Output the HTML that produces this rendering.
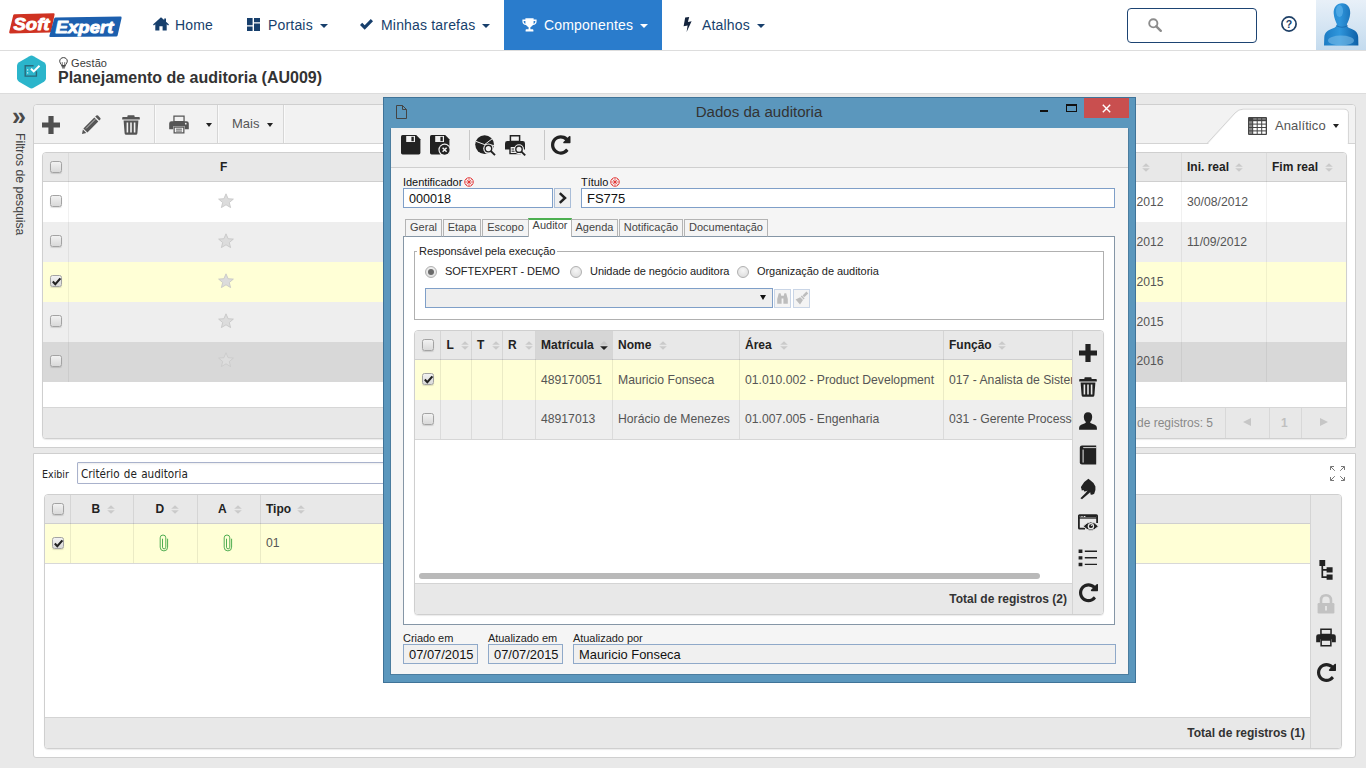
<!DOCTYPE html>
<html lang="pt-BR">
<head>
<meta charset="utf-8">
<title>Planejamento de auditoria (AU009)</title>
<style>
*{box-sizing:border-box;margin:0;padding:0}
html,body{width:1366px;height:768px;overflow:hidden;background:#e9e9e9;font-family:"Liberation Sans",Arial,sans-serif;color:#333}
.a{position:absolute}
svg{display:block;overflow:visible}
#hdr{left:0;top:0;width:1366px;height:51px;background:#fff;border-bottom:1px solid #ddd}
.nav{top:0;height:50px;line-height:50px;font-size:14px;color:#173f6c;white-space:nowrap;letter-spacing:0.18px}
.nav.act{background:#2a7ccc;color:#fff}
.caret{display:inline-block;width:0;height:0;border-left:4px solid transparent;border-right:4px solid transparent;border-top:4px solid currentColor;vertical-align:middle;margin-left:3px}
#sub{left:0;top:51px;width:1366px;height:43px;background:#fff;border-bottom:1px solid #dcdcdc}
.panel{background:#fff;border:1px solid #d0d0d0;border-radius:3px}
.gh{font-weight:bold;font-size:12px;color:#222}
.gt{font-size:12.2px;color:#555;white-space:nowrap}
.cb{width:12px;height:12px;border:1px solid #a3a3a3;border-radius:2.5px;background:linear-gradient(#f2f2f2,#d9d9d9);box-shadow:0 1px 1px rgba(0,0,0,0.13)}
.sort{width:7px;height:9px}
</style>
</head>
<body>
<!-- ============ HEADER ============ -->
<div class="a" id="hdr">
<!-- logo -->
<svg class="a" style="left:8px;top:12px" width="116" height="28" viewBox="0 0 116 28">
<path d="M6.5,2.2 L45.5,1.2 Q46.8,1.2 46.6,2.5 L43.2,19.6 Q43,20.6 41.8,20.6 L2.2,21.4 Q0.9,21.4 1.2,20.1 L5.2,3.3 Q5.5,2.2 6.5,2.2Z" fill="#cf3222"/>
<path d="M47.5,5.4 L112.5,4.6 Q113.8,4.6 113.6,5.9 L109.6,23.4 Q109.3,24.4 108.2,24.4 L42.4,25 Q41,25 41.4,23.7 L46.2,6.4 Q46.5,5.4 47.5,5.4Z" fill="#1c5fae"/>
<text x="5.5" y="17.6" font-family="Liberation Sans,sans-serif" font-weight="bold" font-style="italic" font-size="17" fill="#fff" stroke="#fff" stroke-width="0.9" stroke-linejoin="round" textLength="36" lengthAdjust="spacingAndGlyphs">Soft</text>
<text x="47.5" y="20.8" font-family="Liberation Sans,sans-serif" font-weight="bold" font-style="italic" font-size="17" fill="#fff" stroke="#fff" stroke-width="0.9" stroke-linejoin="round" textLength="58" lengthAdjust="spacingAndGlyphs">Expert</text>
</svg>
<!-- Home -->
<svg class="a" style="left:153px;top:17px" width="16" height="14" viewBox="0 0 16 14"><path d="M8,0.3 L0,7.4 L0.9,8.4 L2.3,7.2 V13.6 H6.4 V9.2 H9.6 V13.6 H13.7 V7.2 L15.1,8.4 L16,7.4 L13,4.7 V1.4 H11.2 V3.1Z" fill="#173f6c"/></svg>
<div class="a nav" style="left:175px">Home</div>
<!-- Portais -->
<svg class="a" style="left:247px;top:18px" width="13" height="13" viewBox="0 0 13 13"><path d="M0,0H5.6V7.2H0Z M7,0H13V4.2H7Z M0,8.6H5.6V13H0Z M7,5.6H13V13H7Z" fill="#173f6c"/></svg>
<div class="a nav" style="left:268px">Portais<span class="caret" style="margin-left:7px"></span></div>
<!-- Minhas tarefas -->
<svg class="a" style="left:360px;top:19px" width="13" height="11" viewBox="0 0 13 11"><path d="M0,5.9 L2.2,3.7 L4.7,6.2 L10.8,0.1 L13,2.3 L4.7,10.7Z" fill="#173f6c"/></svg>
<div class="a nav" style="left:381px">Minhas tarefas<span class="caret" style="margin-left:7px"></span></div>
<!-- Componentes -->
<div class="a nav act" style="left:504px;width:158px"></div>
<svg class="a" style="left:522px;top:18px" width="15" height="14" viewBox="0 0 15 14"><path d="M3.4,0.3H11.6V1.6H14.6V3.4C14.6,5.5 13,6.9 11,7.1C10.3,8.2 9.4,8.9 8.4,9.2V11.2H10.4C11,11.2 11.4,11.6 11.4,12.2V13.4H3.6V12.2C3.6,11.6 4,11.2 4.6,11.2H6.6V9.2C5.6,8.9 4.7,8.2 4,7.1C2,6.9 0.4,5.5 0.4,3.4V1.6H3.4Z M1.7,2.9V3.4C1.7,4.5 2.4,5.3 3.5,5.7C3.4,5 3.4,3.8 3.4,2.9Z M13.3,2.9H11.6C11.6,3.8 11.6,5 11.5,5.7C12.6,5.3 13.3,4.5 13.3,3.4Z" fill="#fff" fill-rule="evenodd"/></svg>
<div class="a nav" style="left:544px;color:#fff">Componentes<span class="caret" style="margin-left:7px"></span></div>
<!-- Atalhos -->
<svg class="a" style="left:683px;top:17px" width="9" height="15" viewBox="0 0 9 15"><path d="M2.2,0.5 L6.2,0 L4.9,5 L8.6,4.3 L3.6,15 L4.6,8.4 L0.6,9.2Z" fill="#14233c"/></svg>
<div class="a nav" style="left:702px">Atalhos<span class="caret" style="margin-left:7px"></span></div>
<!-- search -->
<div class="a" style="left:1127px;top:8px;width:130px;height:35px;border:1px solid #1d4473;border-radius:4px;background:#fff"></div>
<svg class="a" style="left:1148px;top:18px" width="14" height="14" viewBox="0 0 14 14"><circle cx="5.3" cy="5.3" r="4.1" fill="none" stroke="#8c8c8c" stroke-width="1.9"/><path d="M8.3,8.3 L12.8,12.8" stroke="#8c8c8c" stroke-width="2.4" stroke-linecap="round"/></svg>
<!-- help -->
<svg class="a" style="left:1280px;top:15px" width="18" height="18" viewBox="0 0 18 18"><circle cx="9" cy="9" r="7.1" fill="#fff" stroke="#1d3f66" stroke-width="1.7"/><text x="9" y="12.9" text-anchor="middle" font-family="Liberation Sans,sans-serif" font-weight="bold" font-size="10.5" fill="#173f6c">?</text></svg>
<!-- avatar -->
<svg class="a" style="left:1316px;top:0" width="50" height="50" viewBox="0 0 50 50">
<defs><linearGradient id="avb" x1="0" y1="0" x2="0" y2="1"><stop offset="0" stop-color="#e8f0f8"/><stop offset="1" stop-color="#c4dbee"/></linearGradient>
<linearGradient id="avf" x1="0" y1="0" x2="1" y2="0"><stop offset="0" stop-color="#1c7cc4"/><stop offset="0.45" stop-color="#2f96dc"/><stop offset="1" stop-color="#0d5fa6"/></linearGradient></defs>
<rect width="50" height="50" fill="url(#avb)"/>
<path d="M26,3.2 C31.5,3.2 34.6,7.5 34.2,13.5 C33.9,18 32.2,21.5 31,24 C30.4,26 31.5,27.4 34.5,28.6 C39.5,30.4 41.8,32.6 42.2,37 L42.4,45.5 L8,45.5 L8.3,37 C8.8,32.6 11.5,30.4 16.5,28.6 C19.5,27.4 21.2,26 20.8,24 C19.8,21.5 18,18 17.7,13.5 C17.3,7.5 20.5,3.2 26,3.2Z" fill="url(#avf)"/>
<ellipse cx="25" cy="40.5" rx="13" ry="5" fill="#7fc0ea" opacity="0.55"/>
<ellipse cx="23.5" cy="11" rx="3.6" ry="6" fill="#6cbcf0" opacity="0.5"/><path d="M20,25.5 Q26,29 32,25.5" fill="none" stroke="#0b4f8e" stroke-width="0.9" opacity="0.55"/>
</svg>
</div>
<!-- ============ SUBHEADER ============ -->
<div class="a" id="sub">
<svg class="a" style="left:16px;top:4px" width="31" height="35" viewBox="0 0 31 35">
<path d="M13.4,1.2 Q15.5,0 17.6,1.2 L28,7.2 Q30,8.4 30,10.8 V23.2 Q30,25.6 28,26.8 L17.6,32.8 Q15.5,34 13.4,32.8 L3,26.8 Q1,25.6 1,23.2 V10.8 Q1,8.4 3,7.2Z" fill="#2bb5cb"/>
<path d="M17.6,10.8H9.2V21.1H20.4V16.2" fill="none" stroke="#2a6a7c" stroke-width="1.4"/>
<path d="M15,13.7 L17.7,16.4 L23.5,10.8" fill="none" stroke="#fff" stroke-width="2"/>
<path d="M11.6,14.2v1.4 M11.6,17.2v1.4" stroke="#d8f2f6" stroke-width="1.3"/>
</svg>
<svg class="a" style="left:59px;top:6px" width="9" height="12" viewBox="0 0 9 12"><path d="M4.5,0.6 C6.7,0.6 8.3,2.2 8.3,4.2 C8.3,5.6 7.4,6.4 6.9,7.2 C6.6,7.7 6.5,8.2 6.5,8.6 H2.5 C2.5,8.2 2.4,7.7 2.1,7.2 C1.6,6.4 0.7,5.6 0.7,4.2 C0.7,2.2 2.3,0.6 4.5,0.6Z" fill="none" stroke="#333" stroke-width="0.95"/><path d="M2.7,9.7H6.3 M3.1,10.9H5.9" stroke="#333" stroke-width="0.95"/><path d="M3.6,8.4 L3.2,5 M5.4,8.4 L5.8,5" stroke="#333" stroke-width="0.6"/></svg>
<div class="a" style="left:71px;top:6px;font-size:11px;line-height:12px;color:#3a3a3a;letter-spacing:0.1px">Gestão</div>
<div class="a" style="left:58px;top:17px;font-size:16px;line-height:19px;font-weight:bold;color:#333;white-space:nowrap">Planejamento de auditoria (AU009)</div>
</div>
<!-- ============ SIDEBAR ============ -->
<div class="a" style="left:12px;top:104px;font-size:25px;line-height:24px;color:#4a4a4a;font-weight:bold;letter-spacing:-2px">»</div>
<div class="a" style="left:12.5px;top:133px;width:14px;height:110px"><div style="transform:rotate(90deg);transform-origin:0 0;position:absolute;left:14px;top:0;white-space:nowrap;font-size:12.2px;line-height:14px;color:#444">Filtros de pesquisa</div></div>
<!-- ============ PANEL 1 ============ -->
<div id="p1">
<div class="a" style="left:33px;top:104px;width:1323px;height:344px;background:#fff;border:1px solid #cfcfcf;border-radius:4px 4px 0 0"></div>
<div class="a" style="left:34px;top:105px;width:1321px;height:39px;background:#f2f2f2;border-bottom:1px solid #d4d4d4;border-radius:3px 3px 0 0"></div>
<div class="a" style="left:154px;top:105px;width:2px;height:38px;border-left:1px solid #d6d6d6;background:#fafafa"></div>
<div class="a" style="left:217px;top:105px;width:2px;height:38px;border-left:1px solid #d6d6d6;background:#fafafa"></div>
<div class="a" style="left:283px;top:105px;width:2px;height:38px;border-left:1px solid #d6d6d6;background:#fafafa"></div>
<svg class="a" style="left:42px;top:116px" width="18" height="18" viewBox="0 0 18 18"><path d="M6.4,0H11.6V6.4H18V11.6H11.6V18H6.4V11.6H0V6.4H6.4Z" fill="#505050"/></svg>
<svg class="a" style="left:82px;top:115px" width="19" height="19" viewBox="0 0 19 19"><path d="M13.2,1.6 L14.4,0.5 Q15.2,-0.1 16,0.6 L18.3,2.9 Q19,3.7 18.3,4.5 L17.2,5.6Z M12.3,2.6 L16.3,6.6 L5.4,17.4 L1.4,13.5Z M0.9,14.6 L4.3,18 L0,18.9Z" fill="#555"/><path d="M13.3,4.2 L4,13.5" stroke="#f2f2f2" stroke-width="0.7"/></svg>
<svg class="a" style="left:122px;top:115px" width="18" height="20" viewBox="0 0 18 20"><path d="M6.2,0.3H11.8Q12.6,0.3 12.6,1.1V2H17Q17.8,2 17.8,2.8V4.4H0.2V2.8Q0.2,2 1,2H5.4V1.1Q5.4,0.3 6.2,0.3Z" fill="#555"/><path d="M1.6,5.6H16.4L15.4,18.2Q15.3,19.7 13.8,19.7H4.2Q2.7,19.7 2.6,18.2Z M4.6,7.6V17.4H6.2V7.6Z M8.2,7.6V17.4H9.8V7.6Z M11.8,7.6V17.4H13.4V7.6Z" fill="#555" fill-rule="evenodd"/></svg>
<svg class="a" style="left:169px;top:115px" width="20" height="19" viewBox="0 0 21 19"><path d="M5.2,0.6H15.8V6.4H5.2Z" fill="none" stroke="#555" stroke-width="1.3"/><path d="M2.6,6H18.4Q20.8,6 20.8,8.4V14.4H16.6V11.4H4.4V14.4H0.2V8.4Q0.2,6 2.6,6Z" fill="#555"/><circle cx="17.6" cy="8.6" r="0.9" fill="#f2f2f2"/><path d="M5.4,12.2H15.6V18.4H5.4Z" fill="none" stroke="#555" stroke-width="1.3"/><path d="M7.4,14.4H13.6 M7.4,16.4H13.6" stroke="#555" stroke-width="1"/></svg>
<div class="a" style="left:206px;top:123px;border-left:3.5px solid transparent;border-right:3.5px solid transparent;border-top:4px solid #222"></div>
<div class="a" style="left:232px;top:116px;font-size:13px;line-height:16px;color:#555">Mais</div>
<div class="a" style="left:267px;top:123px;border-left:3.5px solid transparent;border-right:3.5px solid transparent;border-top:4px solid #222"></div>
<svg class="a" style="left:1200px;top:105px" width="156" height="40" viewBox="0 0 156 40"><path d="M0,38.5 H7 L35,8 Q38.5,4.2 43,4.2 H144 Q148.4,4.2 148.4,8.6 V38.5 H155" fill="none" stroke="#d4d4d4" stroke-width="1"/><path d="M7.6,39.6 L35.6,8.6 Q39,5 43,4.8 H144 Q147.8,4.8 147.8,8.6 V39.6Z" fill="#fff"/></svg>
<svg class="a" style="left:1248px;top:117px" width="19" height="18" viewBox="0 0 19 18"><rect x="0" y="0" width="19" height="18" rx="1" fill="#444"/><rect x="5.2" y="4.2" width="3.5" height="2.4" fill="#fff"/><rect x="9.7" y="4.2" width="3.5" height="2.4" fill="#fff"/><rect x="14.2" y="4.2" width="3.5" height="2.4" fill="#fff"/><rect x="5.2" y="7.6" width="3.5" height="2.4" fill="#fff"/><rect x="9.7" y="7.6" width="3.5" height="2.4" fill="#fff"/><rect x="14.2" y="7.6" width="3.5" height="2.4" fill="#fff"/><rect x="5.2" y="11.0" width="3.5" height="2.4" fill="#fff"/><rect x="9.7" y="11.0" width="3.5" height="2.4" fill="#fff"/><rect x="14.2" y="11.0" width="3.5" height="2.4" fill="#fff"/><rect x="5.2" y="14.399999999999999" width="3.5" height="2.4" fill="#fff"/><rect x="9.7" y="14.399999999999999" width="3.5" height="2.4" fill="#fff"/><rect x="14.2" y="14.399999999999999" width="3.5" height="2.4" fill="#fff"/><rect x="1" y="4.2" width="3.2" height="2.4" fill="#888"/><rect x="1" y="7.6" width="3.2" height="2.4" fill="#888"/><rect x="1" y="11.0" width="3.2" height="2.4" fill="#888"/><rect x="1" y="14.399999999999999" width="3.2" height="2.4" fill="#888"/><rect x="5.2" y="1" width="3.5" height="2" fill="#777"/><rect x="9.7" y="1" width="3.5" height="2" fill="#777"/><rect x="14.2" y="1" width="3.5" height="2" fill="#777"/></svg>
<div class="a" style="left:1275px;top:118px;font-size:13px;line-height:16px;color:#555;letter-spacing:0.1px">Analítico</div>
<div class="a" style="left:1333px;top:124px;border-left:3.5px solid transparent;border-right:3.5px solid transparent;border-top:4px solid #222"></div>
<div class="a" style="left:42px;top:152px;width:1305px;height:287px;border:1px solid #cfcfcf;border-radius:4px;background:#fff;box-shadow:0 1px 1px rgba(0,0,0,0.08)"></div>
<div class="a" style="left:43px;top:153px;width:1303px;height:29px;background:#e8e8e8;border-bottom:1px solid #cfcfcf;border-radius:3px 3px 0 0"></div>
<div class="a" style="left:43px;top:182px;width:1303px;height:40px;background:#fff"></div>
<div class="a" style="left:43px;top:222px;width:1303px;height:40px;background:#eee"></div>
<div class="a" style="left:43px;top:262px;width:1303px;height:40px;background:#ffffd6"></div>
<div class="a" style="left:43px;top:302px;width:1303px;height:40px;background:#eee"></div>
<div class="a" style="left:43px;top:342px;width:1303px;height:40px;background:#d8d8d8"></div>
<div class="a" style="left:43px;top:407px;width:1303px;height:31px;background:#e8e8e8;border-top:1px solid #d6d6d6;border-radius:0 0 3px 3px"></div>
<div class="a" style="left:68px;top:153px;width:1px;height:229px;background:rgba(0,0,0,0.055)"></div>
<div class="a" style="left:1181px;top:153px;width:1px;height:229px;background:rgba(0,0,0,0.055)"></div>
<div class="a" style="left:1266px;top:153px;width:1px;height:229px;background:rgba(0,0,0,0.055)"></div>
<div class="a cb" style="left:50px;top:161px"></div>
<div class="a gh" style="left:220px;top:160px;line-height:14px">F</div>
<svg class="a" style="left:1142px;top:163px" width="8" height="9" viewBox="0 0 8 9"><path d="M4,0.2 L7.8,3.7 H0.2Z M4,8.8 L0.2,5.3 H7.8Z" fill="#cacaca"/></svg>
<div class="a gh" style="left:1187px;top:160px;line-height:14px">Ini. real</div><svg class="a" style="left:1235px;top:163px" width="8" height="9" viewBox="0 0 8 9"><path d="M4,0.2 L7.8,3.7 H0.2Z M4,8.8 L0.2,5.3 H7.8Z" fill="#cacaca"/></svg>
<div class="a gh" style="left:1272px;top:160px;line-height:14px">Fim real</div><svg class="a" style="left:1325px;top:163px" width="8" height="9" viewBox="0 0 8 9"><path d="M4,0.2 L7.8,3.7 H0.2Z M4,8.8 L0.2,5.3 H7.8Z" fill="#cacaca"/></svg>
<div class="a cb" style="left:50px;top:195px"></div>
<svg class="a" style="left:218px;top:193px" width="16" height="15" viewBox="0 0 16 15"><path d="M8,0.8 L10.1,5.7 L15.4,6.1 L11.3,9.5 L12.6,14.6 L8,11.8 L3.4,14.6 L4.7,9.5 L0.6,6.1 L5.9,5.7Z" fill="#dcdcdc" stroke="#c4c4c4" stroke-width="0.8"/></svg>
<div class="a gt" style="left:1108px;top:194px;width:55.5px;text-align:right;line-height:16px">2012</div>
<div class="a gt" style="left:1187px;top:194px;line-height:16px">30/08/2012</div>
<div class="a cb" style="left:50px;top:235px"></div>
<svg class="a" style="left:218px;top:233px" width="16" height="15" viewBox="0 0 16 15"><path d="M8,0.8 L10.1,5.7 L15.4,6.1 L11.3,9.5 L12.6,14.6 L8,11.8 L3.4,14.6 L4.7,9.5 L0.6,6.1 L5.9,5.7Z" fill="#dcdcdc" stroke="#c4c4c4" stroke-width="0.8"/></svg>
<div class="a gt" style="left:1108px;top:234px;width:55.5px;text-align:right;line-height:16px">2012</div>
<div class="a gt" style="left:1187px;top:234px;line-height:16px">11/09/2012</div>
<div class="a cb" style="left:50px;top:275px"><svg width="11" height="11" viewBox="0 0 11 11" style="position:absolute;left:0;top:0"><path d="M1.8,5.6 L4.3,8.2 L9.4,2.4" fill="none" stroke="#222" stroke-width="2.1"/></svg></div>
<svg class="a" style="left:218px;top:273px" width="16" height="15" viewBox="0 0 16 15"><path d="M8,0.8 L10.1,5.7 L15.4,6.1 L11.3,9.5 L12.6,14.6 L8,11.8 L3.4,14.6 L4.7,9.5 L0.6,6.1 L5.9,5.7Z" fill="#dcdcdc" stroke="#c4c4c4" stroke-width="0.8"/></svg>
<div class="a gt" style="left:1108px;top:274px;width:55.5px;text-align:right;line-height:16px">2015</div>
<div class="a cb" style="left:50px;top:315px"></div>
<svg class="a" style="left:218px;top:313px" width="16" height="15" viewBox="0 0 16 15"><path d="M8,0.8 L10.1,5.7 L15.4,6.1 L11.3,9.5 L12.6,14.6 L8,11.8 L3.4,14.6 L4.7,9.5 L0.6,6.1 L5.9,5.7Z" fill="#dcdcdc" stroke="#c4c4c4" stroke-width="0.8"/></svg>
<div class="a gt" style="left:1108px;top:314px;width:55.5px;text-align:right;line-height:16px">2015</div>
<div class="a cb" style="left:50px;top:355px"></div>
<svg class="a" style="left:218px;top:352px" width="16" height="15" viewBox="0 0 16 15"><path d="M8,0.8 L10.1,5.7 L15.4,6.1 L11.3,9.5 L12.6,14.6 L8,11.8 L3.4,14.6 L4.7,9.5 L0.6,6.1 L5.9,5.7Z" fill="#dddddd" stroke="#c9c9c9" stroke-width="0.8"/></svg>
<div class="a gt" style="left:1108px;top:353px;width:55.5px;text-align:right;line-height:16px">2016</div>
<div class="a" style="left:1000px;top:415px;width:213px;text-align:right;font-size:12px;line-height:16px;color:#888;white-space:nowrap">Total de registros: 5</div>
<div class="a" style="left:1225px;top:408px;width:1px;height:30px;background:#d8d8d8"></div>
<div class="a" style="left:1269px;top:408px;width:1px;height:30px;background:#d8d8d8"></div>
<div class="a" style="left:1301px;top:408px;width:1px;height:30px;background:#d8d8d8"></div>
<div class="a" style="left:1243px;top:418px;border-top:4.5px solid transparent;border-bottom:4.5px solid transparent;border-right:8px solid #c6c6c6"></div>
<div class="a" style="left:1281px;top:415px;font-size:12px;line-height:16px;color:#c0c0c0;font-weight:bold">1</div>
<div class="a" style="left:1320px;top:418px;border-top:4.5px solid transparent;border-bottom:4.5px solid transparent;border-left:8px solid #c6c6c6"></div>
</div>
<!-- ============ PANEL 2 ============ -->
<div id="p2">
<div class="a" style="left:33px;top:453px;width:1323px;height:305px;background:#fff;border:1px solid #cfcfcf;border-radius:0 0 3px 3px"></div>
<div class="a" style="left:42px;top:466.5px;font-family:'DejaVu Sans Condensed','DejaVu Sans',sans-serif;font-size:10.6px;line-height:14px;color:#222">Exibir</div>
<div class="a" style="left:77px;top:462px;width:340px;height:22px;border:1px solid #a9b2cc;background:#fff;border-radius:1px;box-shadow:inset 0 1px 2px rgba(0,0,0,0.08)"></div>
<div class="a" style="left:81px;top:466.5px;font-family:'DejaVu Sans Condensed','DejaVu Sans',sans-serif;font-size:11.6px;line-height:14px;color:#222;word-spacing:1px;white-space:nowrap">Critério de auditoria</div>
<svg class="a" style="left:1330px;top:466px" width="15" height="15" viewBox="0 0 15 15"><g fill="none" stroke="#777" stroke-width="1"><path d="M0.5,4V0.5H4M0.7,0.7L4.8,4.8"/><path d="M11,0.5H14.5V4M14.3,0.7L10.2,4.8"/><path d="M0.5,11V14.5H4M0.7,14.3L4.8,10.2"/><path d="M11,14.5H14.5V11M14.3,14.3L10.2,10.2"/></g></svg>
<div class="a" style="left:44px;top:494px;width:1298px;height:255px;border:1px solid #cfcfcf;border-radius:4px;background:#fff;box-shadow:0 1px 1px rgba(0,0,0,0.08)"></div>
<div class="a" style="left:45px;top:495px;width:1296px;height:29px;background:#e8e8e8;border-bottom:1px solid #cfcfcf;border-radius:3px 3px 0 0"></div>
<div class="a" style="left:45px;top:524px;width:1265px;height:40px;background:#ffffd6;border-bottom:1px solid #d8d8d8"></div>
<div class="a" style="left:1310px;top:495px;width:31px;height:253px;background:#e8e8e8;border-left:1px solid #d4d4d4;border-radius:0 3px 3px 0"></div>
<div class="a" style="left:45px;top:717px;width:1265px;height:31px;background:#e8e8e8;border-top:1px solid #d4d4d4;border-radius:0 0 0 3px"></div>
<div class="a" style="left:70px;top:495px;width:1px;height:68px;background:rgba(0,0,0,0.08)"></div>
<div class="a" style="left:133px;top:495px;width:1px;height:68px;background:rgba(0,0,0,0.08)"></div>
<div class="a" style="left:197px;top:495px;width:1px;height:68px;background:rgba(0,0,0,0.08)"></div>
<div class="a" style="left:260px;top:495px;width:1px;height:68px;background:rgba(0,0,0,0.08)"></div>
<div class="a cb" style="left:52px;top:503px"></div>
<div class="a cb" style="left:52px;top:537px"><svg width="11" height="11" viewBox="0 0 11 11" style="position:absolute;left:0;top:0"><path d="M1.8,5.6 L4.3,8.2 L9.4,2.4" fill="none" stroke="#222" stroke-width="2.1"/></svg></div>
<div class="a gh" style="left:91.5px;top:502px;line-height:14px">B</div><svg class="a" style="left:107px;top:505px" width="8" height="9" viewBox="0 0 8 9"><path d="M4,0.2 L7.8,3.7 H0.2Z M4,8.8 L0.2,5.3 H7.8Z" fill="#cacaca"/></svg>
<div class="a gh" style="left:155.5px;top:502px;line-height:14px">D</div><svg class="a" style="left:171px;top:505px" width="8" height="9" viewBox="0 0 8 9"><path d="M4,0.2 L7.8,3.7 H0.2Z M4,8.8 L0.2,5.3 H7.8Z" fill="#cacaca"/></svg>
<div class="a gh" style="left:218px;top:502px;line-height:14px">A</div><svg class="a" style="left:234px;top:505px" width="8" height="9" viewBox="0 0 8 9"><path d="M4,0.2 L7.8,3.7 H0.2Z M4,8.8 L0.2,5.3 H7.8Z" fill="#cacaca"/></svg>
<div class="a gh" style="left:266px;top:502px;line-height:14px">Tipo</div><svg class="a" style="left:297px;top:505px" width="8" height="9" viewBox="0 0 8 9"><path d="M4,0.2 L7.8,3.7 H0.2Z M4,8.8 L0.2,5.3 H7.8Z" fill="#cacaca"/></svg>
<svg class="a" style="left:158px;top:533px" width="12" height="20" viewBox="0 0 12 20"><path d="M9.6,6.1 V14.2 A3.7,3.7 0 0 1 2.2,14.2 V4.8 A2.8,2.8 0 0 1 7.8,4.8 V14.2 A1.65,1.65 0 0 1 4.5,14.2 V6.1" fill="none" stroke="#47a94b" stroke-width="0.95" stroke-linecap="round"/></svg>
<svg class="a" style="left:221.7px;top:533px" width="12" height="20" viewBox="0 0 12 20"><path d="M9.6,6.1 V14.2 A3.7,3.7 0 0 1 2.2,14.2 V4.8 A2.8,2.8 0 0 1 7.8,4.8 V14.2 A1.65,1.65 0 0 1 4.5,14.2 V6.1" fill="none" stroke="#47a94b" stroke-width="0.95" stroke-linecap="round"/></svg>
<div class="a gt" style="left:266px;top:535px;line-height:16px">01</div>
<div class="a gh" style="left:1100px;top:726px;width:1205px;line-height:14px"></div>
<div class="a" style="left:1105px;top:726px;width:200px;text-align:right;font-size:12px;font-weight:bold;line-height:14px;color:#333;white-space:nowrap">Total de registros (1)</div>
<svg class="a" style="left:1319px;top:560px" width="14" height="20" viewBox="0 0 14 20"><path d="M0.4,0H6.2V6H0.4Z M7.6,7.2H13.6V12.4H7.6Z M7.6,14.4H13.6V19.8H7.6Z" fill="#222"/><path d="M3.3,6V17.1H8 M3.3,9.8H8" fill="none" stroke="#222" stroke-width="1.7"/></svg>
<svg class="a" style="left:1317px;top:594px" width="18" height="20" viewBox="0 0 18 20"><path d="M4,9V6.4Q4,1.2 9,1.2Q14,1.2 14,6.4V9" fill="none" stroke="#c2c2c2" stroke-width="2.6"/><rect x="0.6" y="9" width="16.8" height="10.4" rx="1.2" fill="#c2c2c2"/><path d="M9,12V16.4" stroke="#e8e8e8" stroke-width="1.8"/></svg>
<svg class="a" style="left:1316px;top:628px" width="20" height="19" viewBox="0 0 21 19"><path d="M5.2,0.8H15.8V6.4H5.2Z" fill="#e8e8e8" stroke="#222" stroke-width="1.6"/><path d="M2.6,6H18.4Q20.8,6 20.8,8.4V14.4H16.6V11.4H4.4V14.4H0.2V8.4Q0.2,6 2.6,6Z" fill="#222"/><path d="M5.4,12H15.6V18.2H5.4Z" fill="#e8e8e8" stroke="#222" stroke-width="1.6"/></svg>
<svg class="a" style="left:1317px;top:662.6px" width="19" height="19" viewBox="128 128 1536 1536"><path d="M1664 256v448q0 26-19 45t-45 19h-448q-42 0-59-40-17-39 14-69l138-138q-148-137-349-137-104 0-198.500 40.500t-163.500 109.500-109.500 163.500-40.500 198.500 40.500 198.500 109.500 163.500 163.500 109.500 198.500 40.500q119 0 225-52t179-147q7-10 23-12 15 0 25 9l137 138q9 8 9.500 20.500t-7.500 22.500q-109 132-264 204.500t-327 72.500q-156 0-298-61t-245-164-164-245-61-298 61-298 164-245 245-164 298-61q147 0 284.500 55.500t244.500 156.500l130-129q29-31 70-14 39 17 39 59z" fill="#222"/></svg>
</div>
<!-- ============ DIALOG ============ -->
<div id="dlg">
<div class="a" style="left:383px;top:97px;width:753px;height:586px;background:#5b97bd;border:1px solid #3f7398"></div>
<div class="a" style="left:390px;top:128px;width:739px;height:547px;background:#f5f5f5;border:1px solid #4b7d9f;border-top-color:#5b97bd"></div>
<svg class="a" style="left:396px;top:105px" width="11" height="14" viewBox="0 0 11 14"><path d="M0.5,0.5H6.5L10.5,4.5V13.5H0.5Z M6.5,0.5V4.5H10.5" fill="none" stroke="#444" stroke-width="1"/></svg>
<div class="a" style="left:600px;top:103px;width:318px;text-align:center;font-size:15.1px;line-height:18px;color:#333">Dados da auditoria</div>
<div class="a" style="left:1040px;top:110px;width:8px;height:2px;background:#111"></div>
<div class="a" style="left:1066px;top:104px;width:11px;height:8px;border:1px solid #111;border-top-width:2px"></div>
<div class="a" style="left:1084px;top:98px;width:45px;height:20px;background:#c94f4f"></div>
<svg class="a" style="left:1102px;top:104px" width="9" height="9" viewBox="0 0 9 9"><path d="M0.8,0.8L8.2,8.2M8.2,0.8L0.8,8.2" stroke="#fff" stroke-width="1.4"/></svg>
<div class="a" style="left:391px;top:128px;width:737px;height:40px;background:#f1f1f1;border-bottom:1px solid #cfcfcf"></div>
<div class="a" style="left:469px;top:130px;width:1px;height:30px;background:#c8c8c8"></div>
<div class="a" style="left:544px;top:130px;width:1px;height:30px;background:#c8c8c8"></div>
<svg class="a" style="left:401px;top:135px" width="20" height="20" viewBox="0 0 20 20"><path d="M1.6,0H15.2L19.4,4.2V17.8Q19.4,19.4 17.8,19.4H1.6Q0,19.4 0,17.8V1.6Q0,0 1.6,0Z" fill="#222"/><path d="M5.2,1H14V7H5.2Z" fill="#f1f1f1"/><path d="M10.4,1.8H12.8V6.2H10.4Z" fill="#222"/></svg>
<svg class="a" style="left:430px;top:135px" width="21" height="21" viewBox="0 0 21 21"><path d="M1.6,0H15.2L19.4,4.2V17.8Q19.4,19.4 17.8,19.4H1.6Q0,19.4 0,17.8V1.6Q0,0 1.6,0Z" fill="#222"/><path d="M5.2,1H14V7H5.2Z" fill="#f1f1f1"/><path d="M10.4,1.8H12.8V6.2H10.4Z" fill="#222"/><circle cx="14.6" cy="14.8" r="6.2" fill="#f1f1f1"/><circle cx="14.6" cy="14.8" r="5" fill="#222"/><path d="M12.6,12.8L16.6,16.8M16.6,12.8L12.6,16.8" stroke="#f1f1f1" stroke-width="1.5"/></svg>
<svg class="a" style="left:475px;top:135px" width="21" height="21" viewBox="0 0 21 21"><circle cx="9.6" cy="9.6" r="9.4" fill="#222"/><path d="M9.6,9.6L17.4,3.6 M9.6,9.6L1,6.4 M9.6,9.6L19,10.4" stroke="#f1f1f1" stroke-width="1"/><circle cx="13.4" cy="13.6" r="5.2" fill="#f1f1f1"/><circle cx="13.4" cy="13.6" r="3.3" fill="#f1f1f1" stroke="#222" stroke-width="1.4"/><path d="M15.8,16L20,20.2" stroke="#222" stroke-width="1.9"/></svg>
<svg class="a" style="left:505px;top:135px" width="21" height="21" viewBox="0 0 21 21"><path d="M5.4,0.8H14.6V6.4H5.4Z" fill="#f1f1f1" stroke="#222" stroke-width="1.5"/><path d="M2.4,6H17.6Q20,6 20,8.4V14.6H0V8.4Q0,6 2.4,6Z" fill="#222"/><path d="M5,11.4H15V18.6H5Z" fill="#f1f1f1" stroke="#222" stroke-width="1.4"/><path d="M6.6,14H10 M6.6,16.2H10" stroke="#222" stroke-width="1"/><circle cx="14" cy="14.2" r="5" fill="#f1f1f1"/><circle cx="14" cy="14.2" r="3.2" fill="#f1f1f1" stroke="#222" stroke-width="1.4"/><path d="M16.4,16.6L20.2,20.4" stroke="#222" stroke-width="1.9"/></svg>
<svg class="a" style="left:550.8px;top:135.3px" width="19.5" height="19.8" viewBox="128 128 1536 1536"><path d="M1664 256v448q0 26-19 45t-45 19h-448q-42 0-59-40-17-39 14-69l138-138q-148-137-349-137-104 0-198.500 40.500t-163.500 109.500-109.500 163.500-40.500 198.500 40.500 198.500 109.500 163.500 163.500 109.500 198.500 40.500q119 0 225-52t179-147q7-10 23-12 15 0 25 9l137 138q9 8 9.500 20.500t-7.500 22.500q-109 132-264 204.500t-327 72.500q-156 0-298-61t-245-164-164-245-61-298 61-298 164-245 245-164 298-61q147 0 284.500 55.500t244.500 156.500l130-129q29-31 70-14 39 17 39 59z" fill="#222"/></svg>
<div class="a" style="left:403px;top:176px;font-size:11px;line-height:13px;color:#111;white-space:nowrap;letter-spacing:-0.05px">Identificador</div><svg class="a" style="left:464px;top:176.5px" width="10" height="10" viewBox="0 0 10 10"><circle cx="5" cy="5" r="4.3" fill="none" stroke="#e23030" stroke-width="0.9"/><path d="M5,1.2V8.8 M1.2,5H8.8 M2.4,2.4L7.6,7.6 M7.6,2.4L2.4,7.6" stroke="#e23030" stroke-width="0.7"/><circle cx="5" cy="5" r="1" fill="#e23030"/></svg>
<div class="a" style="left:403px;top:188px;width:150px;height:20px;border:1px solid #7f9fc8;background:#fff;font-size:12.6px;line-height:20px;padding-left:5px;color:#111">000018</div>
<div class="a" style="left:554px;top:188px;width:17px;height:20px;border:1px solid #a9bdd8;background:#f0f0f0"></div>
<svg class="a" style="left:558px;top:192px" width="9" height="12" viewBox="0 0 9 12"><path d="M1.8,1.2L7,6L1.8,10.8" fill="none" stroke="#222" stroke-width="2.5"/></svg>
<div class="a" style="left:581px;top:176px;font-size:11px;line-height:13px;color:#111;white-space:nowrap;letter-spacing:-0.05px">Título</div><svg class="a" style="left:610px;top:176.5px" width="10" height="10" viewBox="0 0 10 10"><circle cx="5" cy="5" r="4.3" fill="none" stroke="#e23030" stroke-width="0.9"/><path d="M5,1.2V8.8 M1.2,5H8.8 M2.4,2.4L7.6,7.6 M7.6,2.4L2.4,7.6" stroke="#e23030" stroke-width="0.7"/><circle cx="5" cy="5" r="1" fill="#e23030"/></svg>
<div class="a" style="left:581px;top:188px;width:534px;height:20px;border:1px solid #7f9fc8;background:#fff;font-size:13px;line-height:20px;padding-left:5px;color:#111">FS775</div>
<div class="a" style="left:403px;top:236px;width:712px;height:389px;border:1px solid #8596a6;background:#fff"></div>
<div class="a" style="left:405px;top:219px;width:37px;height:18px;border:1px solid #b4b4b4;border-bottom-color:#8596a6;background:#f4f4f4;font-size:11px;line-height:14px;text-align:center;color:#444;white-space:nowrap">Geral</div>
<div class="a" style="left:443px;top:219px;width:38px;height:18px;border:1px solid #b4b4b4;border-bottom-color:#8596a6;background:#f4f4f4;font-size:11px;line-height:14px;text-align:center;color:#444;white-space:nowrap">Etapa</div>
<div class="a" style="left:482px;top:219px;width:47px;height:18px;border:1px solid #b4b4b4;border-bottom-color:#8596a6;background:#f4f4f4;font-size:11px;line-height:14px;text-align:center;color:#444;white-space:nowrap">Escopo</div>
<div class="a" style="left:571px;top:219px;width:47px;height:18px;border:1px solid #b4b4b4;border-bottom-color:#8596a6;background:#f4f4f4;font-size:11px;line-height:14px;text-align:center;color:#444;white-space:nowrap">Agenda</div>
<div class="a" style="left:619px;top:219px;width:64px;height:18px;border:1px solid #b4b4b4;border-bottom-color:#8596a6;background:#f4f4f4;font-size:11px;line-height:14px;text-align:center;color:#444;white-space:nowrap">Notificação</div>
<div class="a" style="left:684px;top:219px;width:84px;height:18px;border:1px solid #b4b4b4;border-bottom-color:#8596a6;background:#f4f4f4;font-size:11px;line-height:14px;text-align:center;color:#444;white-space:nowrap">Documentação</div>
<div class="a" style="left:528px;top:218px;width:44px;height:19px;border:1px solid #b4b4b4;border-top:2px solid #4caf50;border-bottom:none;background:#fff;font-size:11px;line-height:11px;text-align:center;color:#444">Auditor</div>
<div class="a" style="left:414px;top:251px;width:690px;height:69px;border:1px solid #b0b0b0"></div>
<div class="a" style="left:417px;top:245px;background:#fff;padding:0 2px;font-size:11px;line-height:13px;color:#111;white-space:nowrap;letter-spacing:-0.05px;color:#222">Responsável pela execução</div>
<div class="a" style="left:425px;top:266px;width:12px;height:12px;border-radius:50%;border:1px solid #b0b0b0;background:radial-gradient(circle at 50% 35%,#f6f6f6,#d9d9d9)"><div style="position:absolute;left:2px;top:2px;width:6px;height:6px;border-radius:50%;background:#6a6a6a"></div></div>
<div class="a" style="left:445px;top:265px;font-size:11px;line-height:13px;color:#111;white-space:nowrap;letter-spacing:-0.05px;color:#222">SOFTEXPERT - DEMO</div>
<div class="a" style="left:570px;top:266px;width:12px;height:12px;border-radius:50%;border:1px solid #b0b0b0;background:radial-gradient(circle at 50% 35%,#f6f6f6,#d9d9d9)"></div>
<div class="a" style="left:590px;top:265px;font-size:11px;line-height:13px;color:#111;white-space:nowrap;letter-spacing:-0.05px;color:#222">Unidade de negócio auditora</div>
<div class="a" style="left:737px;top:266px;width:12px;height:12px;border-radius:50%;border:1px solid #b0b0b0;background:radial-gradient(circle at 50% 35%,#f6f6f6,#d9d9d9)"></div>
<div class="a" style="left:757px;top:265px;font-size:11px;line-height:13px;color:#111;white-space:nowrap;letter-spacing:-0.05px;color:#222">Organização de auditoria</div>
<div class="a" style="left:425px;top:288px;width:348px;height:20px;border:1px solid #7f9fc8;background:#eee"></div>
<div class="a" style="left:759.8px;top:295px;border-left:3.2px solid transparent;border-right:3.2px solid transparent;border-top:5.6px solid #111"></div>
<div class="a" style="left:774px;top:289px;width:17px;height:19px;border:1px solid #c9d5e6;background:#f4f4f4"></div>
<div class="a" style="left:793px;top:289px;width:17px;height:19px;border:1px solid #c9d5e6;background:#f4f4f4"></div>
<svg class="a" style="left:777px;top:293px" width="11" height="11" viewBox="0 0 11 11"><path d="M1.8,0.3H3.6L4.2,2.8H6.8L7.4,0.3H9.2L10.8,6V10.8H6.4V5.4H4.6V10.8H0.2V6Z" fill="#bdbdbd"/></svg>
<svg class="a" style="left:795px;top:291px" width="14" height="14" viewBox="0 0 14 14"><path d="M11.4,0.6L13.2,2.4L9.2,6.2L7.6,4.6Z" fill="#bdbdbd"/><path d="M6.8,4.6L9.6,7.4L8.6,8.4L5.8,5.6Z" fill="#bdbdbd"/><path d="M5.2,6.2L8,9L5,13.4L0.6,8.6Z" fill="#bdbdbd"/></svg>
<div class="a" style="left:414px;top:330px;width:690px;height:285px;border:1px solid #cfcfcf;border-radius:4px;background:#fff;box-shadow:0 1px 1px rgba(0,0,0,0.08)"></div>
<div class="a" style="left:415px;top:331px;width:657px;height:29px;background:#e8e8e8;border-bottom:1px solid #cfcfcf;border-radius:3px 0 0 0"></div>
<div class="a" style="left:536px;top:331px;width:76px;height:28px;background:#d6d6d6"></div>
<div class="a" style="left:415px;top:360px;width:657px;height:40px;background:#ffffd6"></div>
<div class="a" style="left:415px;top:400px;width:657px;height:40px;background:#eee;border-bottom:1px solid #d6d6d6"></div>
<div class="a" style="left:440px;top:331px;width:1px;height:108px;background:rgba(0,0,0,0.08)"></div>
<div class="a" style="left:471px;top:331px;width:1px;height:108px;background:rgba(0,0,0,0.08)"></div>
<div class="a" style="left:502px;top:331px;width:1px;height:108px;background:rgba(0,0,0,0.08)"></div>
<div class="a" style="left:535px;top:331px;width:1px;height:108px;background:rgba(0,0,0,0.08)"></div>
<div class="a" style="left:612px;top:331px;width:1px;height:108px;background:rgba(0,0,0,0.08)"></div>
<div class="a" style="left:739px;top:331px;width:1px;height:108px;background:rgba(0,0,0,0.08)"></div>
<div class="a" style="left:943px;top:331px;width:1px;height:108px;background:rgba(0,0,0,0.08)"></div>
<div class="a" style="left:1072px;top:331px;width:31px;height:283px;background:#e8e8e8;border-left:1px solid #d4d4d4;border-radius:0 3px 3px 0"></div>
<div class="a" style="left:415px;top:583px;width:657px;height:31px;background:#e8e8e8;border-top:1px solid #d4d4d4;border-radius:0 0 0 3px"></div>
<div class="a" style="left:419px;top:573px;width:621px;height:6px;border-radius:3px;background:#b9b9b9"></div>
<div class="a cb" style="left:422px;top:339px"></div>
<div class="a cb" style="left:422px;top:373px"><svg width="11" height="11" viewBox="0 0 11 11" style="position:absolute;left:0;top:0"><path d="M1.8,5.6 L4.3,8.2 L9.4,2.4" fill="none" stroke="#222" stroke-width="2.1"/></svg></div>
<div class="a cb" style="left:422px;top:413px"></div>
<div class="a gh" style="left:446.5px;top:338px;line-height:14px">L</div><svg class="a" style="left:461px;top:341px" width="8" height="9" viewBox="0 0 8 9"><path d="M4,0.2 L7.8,3.7 H0.2Z M4,8.8 L0.2,5.3 H7.8Z" fill="#cacaca"/></svg>
<div class="a gh" style="left:477px;top:338px;line-height:14px">T</div><svg class="a" style="left:492px;top:341px" width="8" height="9" viewBox="0 0 8 9"><path d="M4,0.2 L7.8,3.7 H0.2Z M4,8.8 L0.2,5.3 H7.8Z" fill="#cacaca"/></svg>
<div class="a gh" style="left:508px;top:338px;line-height:14px">R</div><svg class="a" style="left:525px;top:341px" width="8" height="9" viewBox="0 0 8 9"><path d="M4,0.2 L7.8,3.7 H0.2Z M4,8.8 L0.2,5.3 H7.8Z" fill="#cacaca"/></svg>
<div class="a gh" style="left:618px;top:338px;line-height:14px">Nome</div><svg class="a" style="left:659px;top:341px" width="8" height="9" viewBox="0 0 8 9"><path d="M4,0.2 L7.8,3.7 H0.2Z M4,8.8 L0.2,5.3 H7.8Z" fill="#cacaca"/></svg>
<div class="a gh" style="left:745px;top:338px;line-height:14px">Área</div><svg class="a" style="left:780px;top:341px" width="8" height="9" viewBox="0 0 8 9"><path d="M4,0.2 L7.8,3.7 H0.2Z M4,8.8 L0.2,5.3 H7.8Z" fill="#cacaca"/></svg>
<div class="a gh" style="left:949px;top:338px;line-height:14px">Função</div><svg class="a" style="left:998px;top:341px" width="8" height="9" viewBox="0 0 8 9"><path d="M4,0.2 L7.8,3.7 H0.2Z M4,8.8 L0.2,5.3 H7.8Z" fill="#cacaca"/></svg>
<div class="a gh" style="left:541px;top:338px;line-height:14px">Matrícula</div>
<svg class="a" style="left:600px;top:341px" width="8" height="9" viewBox="0 0 8 9"><path d="M4,0 L7.9,3.7 H0.1Z" fill="#c6c6c6"/><path d="M4,9 L0.1,5.3 H7.9Z" fill="#222"/></svg>
<div class="a gt" style="left:541px;top:372px;line-height:16px">489170051</div>
<div class="a gt" style="left:618px;top:372px;line-height:16px">Mauricio Fonseca</div>
<div class="a gt" style="left:745px;top:372px;line-height:16px">01.010.002 - Product Development</div>
<div class="a gt" style="left:541px;top:411px;line-height:16px">48917013</div>
<div class="a gt" style="left:618px;top:411px;line-height:16px">Horácio de Menezes</div>
<div class="a gt" style="left:745px;top:411px;line-height:16px">01.007.005 - Engenharia</div>
<div class="a gt" style="left:949px;top:372px;width:123px;overflow:hidden;line-height:16px">017 - Analista de Sistemas</div>
<div class="a gt" style="left:949px;top:411px;width:123px;overflow:hidden;line-height:16px">031 - Gerente Processos</div>
<div class="a" style="left:860px;top:592px;width:207px;text-align:right;font-size:12px;font-weight:bold;line-height:14px;color:#333;white-space:nowrap">Total de registros (2)</div>
<svg class="a" style="left:1079px;top:344px" width="18" height="18" viewBox="0 0 18 18"><path d="M6.4,0H11.6V6.4H18V11.6H11.6V18H6.4V11.6H0V6.4H6.4Z" fill="#222"/></svg>
<svg class="a" style="left:1079px;top:377px" width="18" height="20" viewBox="0 0 18 20"><path d="M6.2,0.3H11.8Q12.6,0.3 12.6,1.1V2H17Q17.8,2 17.8,2.8V4.4H0.2V2.8Q0.2,2 1,2H5.4V1.1Q5.4,0.3 6.2,0.3Z" fill="#222"/><path d="M1.6,5.6H16.4L15.4,18.2Q15.3,19.7 13.8,19.7H4.2Q2.7,19.7 2.6,18.2Z M4.6,7.6V17.4H6.2V7.6Z M8.2,7.6V17.4H9.8V7.6Z M11.8,7.6V17.4H13.4V7.6Z" fill="#222" fill-rule="evenodd"/></svg>
<svg class="a" style="left:1079px;top:412px" width="18" height="18" viewBox="0 0 18 18"><path d="M9,0.3Q13.2,0.3 13.2,5Q13.2,8.2 11.2,9.9Q11,10.8 12,11.3L15.8,12.8Q17.9,13.7 17.9,15.8V17.7H0.1V15.8Q0.1,13.7 2.2,12.8L6,11.3Q7,10.8 6.8,9.9Q4.8,8.2 4.8,5Q4.8,0.3 9,0.3Z" fill="#222"/></svg>
<svg class="a" style="left:1079px;top:445px" width="18" height="20" viewBox="0 0 18 20"><path d="M3,0.6H17.2V19.4H3Q0.8,19.4 0.8,17.2V2.8Q0.8,0.6 3,0.6Z" fill="#222"/><path d="M4.2,2.6H17.2" stroke="#e8e8e8" stroke-width="0.9"/><path d="M4.1,4.6V17.6" stroke="#e8e8e8" stroke-width="1"/></svg>
<svg class="a" style="left:1078px;top:478px" width="20" height="22" viewBox="0 0 20 22"><path d="M10.4,0.8 L12.6,2.6 Q16.4,5 17.4,8.6 Q18,12.6 16.2,15.8 Q14.4,17 12.6,16.6 L12.2,14.2 L9,17 L4,21.2 L2.4,20.2 L7.4,15.2 L9.6,12.4 Q8,13.2 6.2,13.6 L5.6,12 L3.8,12.4 L3.4,10.6 Q2.6,9.8 3.2,8.4 Q5.6,3.6 10.4,0.8Z" fill="#222"/></svg>
<svg class="a" style="left:1077px;top:513px" width="22" height="18" viewBox="0 0 22 18"><path d="M2.6,2.1 H19.4 Q20.1,2.1 20.1,2.8 V10 M2.6,2.1 Q1.9,2.1 1.9,2.8 V15 Q1.9,15.7 2.6,15.7 H8" fill="none" stroke="#222" stroke-width="1.8"/><path d="M1.9,5H20.1" stroke="#222" stroke-width="1.3"/><path d="M3.2,3.5H4.4 M5.6,3.5H6.8" stroke="#222" stroke-width="0.9"/><path d="M8.4,3.5H19.4" stroke="#222" stroke-width="1.1"/><path d="M6.2,13.3 Q13.8,4.6 21.4,13.3 Q13.8,21.6 6.2,13.3Z" fill="#222" stroke="#e8e8e8" stroke-width="0.9"/><circle cx="13.9" cy="13.2" r="3.2" fill="#e8e8e8"/><circle cx="13.9" cy="13.2" r="1.9" fill="#222"/><circle cx="14.5" cy="12.5" r="0.6" fill="#e8e8e8"/></svg>
<svg class="a" style="left:1078px;top:549px" width="20" height="18" viewBox="0 0 20 18"><path d="M0.6,0.6H4.4V4H0.6Z M0.6,7.2H4.4V10.6H0.6Z M0.6,13.8H4.4V17.2H0.6Z" fill="#222"/><path d="M6.8,2.2H19 M6.8,8.8H19 M6.8,15.4H19" stroke="#222" stroke-width="1.4"/></svg>
<svg class="a" style="left:1078.6px;top:582.6px" width="19" height="19.5" viewBox="128 128 1536 1536"><path d="M1664 256v448q0 26-19 45t-45 19h-448q-42 0-59-40-17-39 14-69l138-138q-148-137-349-137-104 0-198.500 40.500t-163.500 109.500-109.500 163.500-40.500 198.500 40.500 198.500 109.500 163.500 163.500 109.500 198.500 40.500q119 0 225-52t179-147q7-10 23-12 15 0 25 9l137 138q9 8 9.500 20.500t-7.500 22.500q-109 132-264 204.500t-327 72.500q-156 0-298-61t-245-164-164-245-61-298 61-298 164-245 245-164 298-61q147 0 284.500 55.500t244.500 156.500l130-129q29-31 70-14 39 17 39 59z" fill="#222"/></svg>
<div class="a" style="left:403px;top:632px;font-size:11px;line-height:13px;color:#111;white-space:nowrap;letter-spacing:-0.05px;color:#222">Criado em</div>
<div class="a" style="left:488px;top:632px;font-size:11px;line-height:13px;color:#111;white-space:nowrap;letter-spacing:-0.05px;color:#222">Atualizado em</div>
<div class="a" style="left:573px;top:632px;font-size:11px;line-height:13px;color:#111;white-space:nowrap;letter-spacing:-0.05px;color:#222">Atualizado por</div>
<div class="a" style="left:403px;top:644px;width:75px;height:20px;border:1px solid #8fa9c9;background:#f0f0f0;font-size:12.9px;line-height:20px;padding-left:5px;color:#111;white-space:nowrap">07/07/2015</div>
<div class="a" style="left:488px;top:644px;width:75px;height:20px;border:1px solid #8fa9c9;background:#f0f0f0;font-size:12.9px;line-height:20px;padding-left:5px;color:#111;white-space:nowrap">07/07/2015</div>
<div class="a" style="left:573px;top:644px;width:543px;height:20px;border:1px solid #8fa9c9;background:#f0f0f0;font-size:12.9px;line-height:20px;padding-left:5px;color:#111;white-space:nowrap">Mauricio Fonseca</div>
</div>
</body>
</html>
